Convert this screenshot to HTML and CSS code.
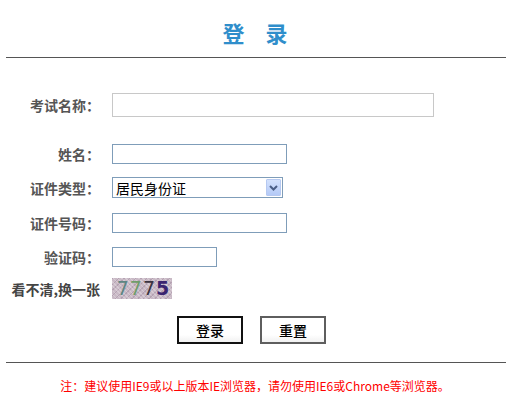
FILE: index.html
```html
<!DOCTYPE html>
<html lang="zh-CN">
<head>
<meta charset="utf-8">
<title>登录</title>
<link rel="stylesheet" href="styles.css">
</head>
<body>
<div class="page">
  <div class="title"><span>登</span><span>录</span></div>
  <div class="rule"></div>
  <form class="form">
    <div class="row row-exam">
      <label class="label">考试名称：</label>
      <input class="field field-exam" type="text">
    </div>
    <div class="row row-name">
      <label class="label">姓名：</label>
      <input class="field field-blue field-mid" type="text">
    </div>
    <div class="row row-type">
      <label class="label">证件类型：</label>
      <div class="select">
        <span class="select-text">居民身份证</span>
        <span class="select-btn"><svg width="9" height="6" viewBox="0 0 9 6"><path d="M1 1 L4.5 4.5 L8 1" fill="none" stroke="#4a5e86" stroke-width="2"/></svg></span>
      </div>
    </div>
    <div class="row row-id">
      <label class="label">证件号码：</label>
      <input class="field field-blue field-mid" type="text">
    </div>
    <div class="row row-code">
      <label class="label">验证码：</label>
      <input class="field field-blue field-short" type="text">
    </div>
    <div class="row row-captcha">
      <span class="label label-link">看不清,换一张</span>
      <div class="captcha"><span class="d1">7</span><span class="d2">7</span><span class="d3">7</span><span class="d4">5</span></div>
    </div>
    <div class="buttons">
      <button type="button" class="btn btn-primary">登录</button>
      <button type="button" class="btn btn-reset">重置</button>
    </div>
  </form>
  <div class="rule rule-bottom"></div>
  <p class="note">注：建议使用IE9或以上版本IE浏览器，请勿使用IE6或Chrome等浏览器。</p>
</div>
</body>
</html>
```

FILE: styles.css
```css
* { box-sizing: border-box; }
html, body { margin: 0; padding: 0; background: #fff; }
body {
  font-family: "Noto Sans CJK SC", "Liberation Sans", sans-serif;
  font-size: 14px;
  color: #333;
}
.page { width: 508px; }

.title {
  display: flex;
  justify-content: center;
  gap: 21px;
  padding: 21px 0 14px 2px;
  height: 57px;
  font-size: 22px;
  line-height: 22px;
  font-weight: bold;
  color: #2f8ecb;
}

.rule {
  height: 1px;
  background: #555;
  margin: 0 2px 0 6px;
}

.form { padding-top: 35px; }

.row {
  display: flex;
  align-items: center;
}
.row-name { margin-top: 27px; }
.row-type { margin-top: 13px; }
.row-id { margin-top: 15px; }
.row-code { margin-top: 14px; }
.row-captcha { margin-top: 11px; }

.label {
  width: 100px;
  margin-right: 12px;
  text-align: right;
  font-size: 14px;
  line-height: 16px;
  font-weight: bold;
  color: #555;
  white-space: nowrap;
}
.label-link { font-weight: bold; color: #444; }

.field {
  display: block;
  margin: 0;
  padding: 0 3px;
  background: #fff;
  font: inherit;
  outline: none;
}
.field-exam {
  width: 322px;
  height: 24px;
  border: 1px solid #c8c8c8;
}
.field-blue { border: 1px solid #7f9db9; height: 20px; }
.field-mid { width: 175px; }
.field-short { width: 105px; }

.select {
  width: 171px;
  height: 21px;
  border: 1px solid #7f9db9;
  display: flex;
  align-items: center;
  justify-content: space-between;
  padding: 0 1px 0 3px;
  background: #fff;
}
.select-text {
  font-size: 14px;
  line-height: 16px;
  color: #000;
}
.select-btn {
  width: 15px;
  height: 17px;
  border: 1px solid #b6c9f1;
  border-radius: 1px;
  background: linear-gradient(#d3e1fd, #b4caf7);
  display: flex;
  align-items: center;
  justify-content: center;
}

.captcha {
  width: 60px;
  height: 21px;
  background-color: #c9bac6;
  background-image:
    repeating-linear-gradient(45deg, rgba(255,255,255,0.25) 0 1px, transparent 1px 3px),
    repeating-linear-gradient(-45deg, rgba(120,90,120,0.25) 0 1px, transparent 1px 4px);
  display: flex;
  align-items: center;
  justify-content: center;
  gap: 1px;
  font-family: "DejaVu Sans", sans-serif;
  font-size: 19px;
  line-height: 21px;
  padding-left: 2px;
}
.d1 { color: #5d8683; }
.d2 { color: #6f9d6a; }
.d3 { color: #3b3440; }
.d4 { color: #3a2470; font-weight: bold; }

.buttons {
  display: flex;
  gap: 17px;
  margin-top: 17px;
  padding-left: 177px;
}
.btn {
  width: 66px;
  height: 28px;
  margin: 0;
  padding: 0;
  background: linear-gradient(#fff 70%, #f1f1f1);
  font-family: "Noto Sans CJK SC", sans-serif;
  font-size: 14px;
  line-height: 16px;
  color: #000;
  font-weight: 500;
}
.btn-primary { border: 2px solid #111; }
.btn-reset { border: 2px solid #5e5e5e; }

.rule-bottom { margin-top: 18px; }

.note {
  margin: 17px 0 0;
  text-align: center;
  padding-left: 2px;
  font-size: 12px;
  line-height: 12px;
  color: #f00;
}
```
